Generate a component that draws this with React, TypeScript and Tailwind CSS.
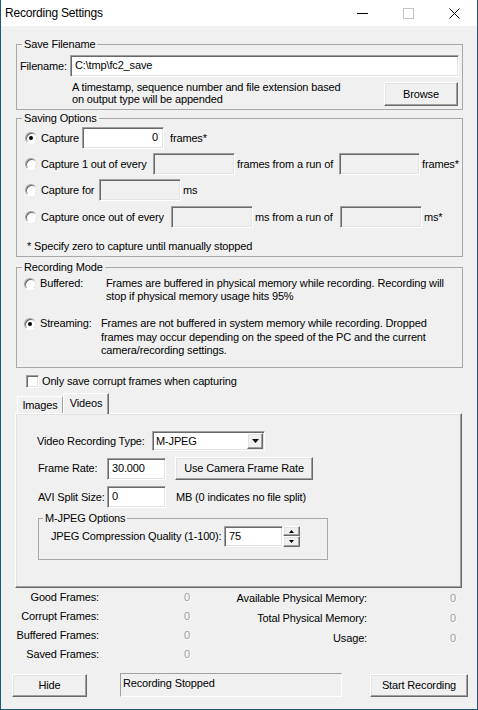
import React from 'react';

const raised =
  'bg-[#f0f0f0] border border-t-white border-l-white border-b-[#696969] border-r-[#696969] shadow-[inset_-1px_-1px_0_#a0a0a0,inset_1px_1px_0_#e3e3e3]';
const sunken =
  'border border-t-[#a0a0a0] border-l-[#a0a0a0] border-b-white border-r-white shadow-[inset_1px_1px_0_#696969,inset_-1px_-1px_0_#e3e3e3]';
const disabledText = 'text-[#a0a0a0] [text-shadow:1px_1px_0_#fff]';

const Radio = ({ checked }: { checked?: boolean }) => (
  <span className="flex w-[12px] h-[12px] shrink-0 items-center justify-center rounded-full bg-white border border-t-[#a0a0a0] border-l-[#a0a0a0] border-b-white border-r-[#e3e3e3] shadow-[inset_1px_1px_0_#696969]">
    {checked && <span className="w-[4px] h-[4px] rounded-full bg-black" />}
  </span>
);

const Field = ({ w, h = 22, value, white, right }: { w: string; h?: number; value?: string; white?: boolean; right?: boolean }) => (
  <div
    className={`${sunken} ${w} ${white ? 'bg-white' : 'bg-[#f0f0f0]'} ${right ? 'justify-end pr-[5px]' : 'pl-[4px]'} flex items-start pt-[3px] shrink-0`}
    style={{ height: h }}
  >
    {value}
  </div>
);

const Group = ({ title, className, legendMl = 'ml-[5px]', children }: { title: string; className: string; legendMl?: string; children?: React.ReactNode }) => (
  <fieldset className={`border border-[#a8a8a8] min-w-0 ${className}`}>
    <legend className={`${legendMl} px-[2px] leading-[13px]`}>{title}</legend>
    {children}
  </fieldset>
);

const Btn = ({ label, className }: { label: string; className: string }) => (
  <div className={`${raised} ${className} flex items-center justify-center shrink-0`}>{label}</div>
);

const Stat = ({ label, lw, vw, h }: { label: string; lw: string; vw: string; h: string }) => (
  <div className={`flex items-center ${h}`}>
    <div className={`${lw} text-right whitespace-nowrap`}>{label}</div>
    <div className={`${vw} text-right ${disabledText}`}>0</div>
  </div>
);

export default function App() {
  return (
    <div className="w-[478px] h-[710px] bg-[#f0f0f0] border-x border-b border-[#1f5779] flex flex-col font-['Liberation_Sans',Arial,sans-serif] text-[11px] leading-[13px] tracking-[-0.15px] text-black overflow-hidden">
      {/* Title bar */}
      <div className="h-[26px] bg-white flex items-center shrink-0">
        <div className="flex-1 pl-[4px] text-[12px] tracking-[-0.2px]">Recording Settings</div>
        <div className="w-[46px] h-[26px] flex items-center justify-center">
          <svg width="11" height="11" viewBox="0 0 11 11">
            <line x1="0" y1="5.5" x2="11" y2="5.5" stroke="#000" strokeWidth="1" />
          </svg>
        </div>
        <div className="w-[46px] h-[26px] flex items-center justify-center">
          <svg width="11" height="11" viewBox="0 0 11 11">
            <rect x="0.5" y="0.5" width="10" height="10" fill="none" stroke="#c4c4c4" strokeWidth="1" />
          </svg>
        </div>
        <div className="w-[46px] h-[26px] flex items-center justify-center">
          <svg width="11" height="11" viewBox="0 0 11 11">
            <path d="M0.5 0.5 L10.5 10.5 M10.5 0.5 L0.5 10.5" stroke="#000" strokeWidth="1" />
          </svg>
        </div>
      </div>

      {/* Body */}
      <div className="flex flex-col">
        <Group title="Save Filename" className="ml-[15px] mt-[12px] w-[447px] h-[72px]">
          <div className="flex items-center mt-[4px]">
            <div className="w-[53px] pl-[3px]">Filename:</div>
            <Field w="w-[389px]" white value="C:\tmp\fc2_save" />
          </div>
          <div className="flex justify-between items-start mt-[4px]">
            <div className="ml-[55px] leading-[12px] whitespace-nowrap">
              A timestamp, sequence number and file extension based
              <br />
              on output type will be appended
            </div>
            <Btn label="Browse" className="mt-[1px] mr-[4px] w-[74px] h-[24px]" />
          </div>
        </Group>

        <Group title="Saving Options" className="ml-[15px] mt-[2px] w-[447px] h-[145px]">
          <div className="flex flex-col gap-[4px] mt-[2px]">
            <div className="flex items-center h-[22px]">
              <span className="ml-[8px]"><Radio checked /></span>
              <div className="ml-[4px] w-[41px]">Capture</div>
              <Field w="w-[82px]" white right value="0" />
              <div className="ml-[6px]">frames*</div>
            </div>
            <div className="flex items-center h-[22px]">
              <span className="ml-[8px]"><Radio /></span>
              <div className="ml-[4px] w-[112px] whitespace-nowrap">Capture 1 out of every</div>
              <Field w="w-[82px]" />
              <div className="w-[104px] pl-[2px] whitespace-nowrap">frames from a run of</div>
              <Field w="w-[81px]" />
              <div className="ml-[2px]">frames*</div>
            </div>
            <div className="flex items-center h-[22px]">
              <span className="ml-[8px]"><Radio /></span>
              <div className="ml-[4px] w-[58px] whitespace-nowrap">Capture for</div>
              <Field w="w-[82px]" />
              <div className="ml-[2px]">ms</div>
            </div>
            <div className="flex items-center h-[22px] mt-[1px]">
              <span className="ml-[8px]"><Radio /></span>
              <div className="ml-[4px] w-[130px] whitespace-nowrap">Capture once out of every</div>
              <Field w="w-[82px]" />
              <div className="w-[87px] pl-[2px] whitespace-nowrap">ms from a run of</div>
              <Field w="w-[82px]" />
              <div className="ml-[2px]">ms*</div>
            </div>
          </div>
          <div className="pl-[10px] mt-[12px]">* Specify zero to capture until manually stopped</div>
        </Group>

        <Group title="Recording Mode" className="ml-[15px] mt-[4px] w-[447px] h-[107px]">
          <div className="flex items-start mt-[3px]">
            <span className="ml-[7px] mt-[1px]"><Radio /></span>
            <div className="ml-[4px] w-[66px]">Buffered:</div>
            <div className="whitespace-nowrap">
              Frames are buffered in physical memory while recording. Recording will
              <br />
              stop if physical memory usage hits 95%
            </div>
          </div>
          <div className="flex items-start mt-[14px]">
            <span className="ml-[7px] mt-[1px]"><Radio checked /></span>
            <div className="ml-[4px] w-[61px]">Streaming:</div>
            <div className="whitespace-nowrap leading-[13.5px]">
              Frames are not buffered in system memory while recording. Dropped
              <br />
              frames may occur depending on the speed of the PC and the current
              <br />
              camera/recording settings.
            </div>
          </div>
        </Group>

        <div className="flex items-center mt-[7px] ml-[25px] h-[13px]">
          <span className={`w-[13px] h-[13px] bg-white ${sunken}`} />
          <div className="ml-[3px]">Only save corrupt frames when capturing</div>
        </div>

        {/* Tabs */}
        <div className="flex items-end ml-[16px] mt-[5px] h-[20px]">
          <div className="w-[46px] h-[17px] flex items-center justify-center border-t border-l border-t-white border-l-white border-r border-r-[#a0a0a0]">
            Images
          </div>
          <div className="relative z-10 w-[46px] h-[21px] -mb-[1px] bg-[#f0f0f0] flex items-start justify-center pt-[3px] border-t border-l border-t-white border-l-white border-r border-r-[#696969] shadow-[inset_-1px_0_0_#a0a0a0]">
            Videos
          </div>
        </div>
        <div className={`${raised} ml-[14px] w-[447px] h-[175px] pl-[21px] pt-[17px]`}>
          <div className="flex items-center h-[20px]">
            <div className="w-[115px] whitespace-nowrap">Video Recording Type:</div>
            <div className={`${sunken} bg-white w-[113px] h-[20px] flex items-center justify-between pl-[3px] pr-[1px]`}>
              <span>M-JPEG</span>
              <div className={`${raised} w-[16px] h-[16px] flex items-center justify-center`}>
                <svg width="7" height="4" viewBox="0 0 7 4">
                  <path d="M0 0 H7 L3.5 4 Z" fill="#000" />
                </svg>
              </div>
            </div>
          </div>
          <div className="flex items-center mt-[6px]">
            <div className="w-[70px] pl-[1px]">Frame Rate:</div>
            <Field w="w-[59px]" white value="30.000" />
            <Btn label="Use Camera Frame Rate" className="ml-[9px] w-[138px] h-[23px]" />
          </div>
          <div className="flex items-center mt-[6px]">
            <div className="w-[70px] pl-[1px] whitespace-nowrap">AVI Split Size:</div>
            <Field w="w-[59px]" white value="0" />
            <div className="ml-[10px]">MB (0 indicates no file split)</div>
          </div>
          <Group title="M-JPEG Options" legendMl="ml-[4px]" className="ml-[1px] mt-[4px] w-[290px] h-[48px]">
            <div className="flex items-center mt-[1px] h-[21px]">
              <div className="w-[185px] pl-[12px] whitespace-nowrap">JPEG Compression Quality (1-100):</div>
              <Field w="w-[59px]" h={21} white value="75" />
              <div className="flex flex-col w-[17px] h-[21px]">
                <div className={`${raised} h-[10px] flex items-center justify-center`}>
                  <svg width="5" height="3" viewBox="0 0 5 3">
                    <path d="M0 3 H5 L2.5 0 Z" fill="#000" />
                  </svg>
                </div>
                <div className={`${raised} h-[11px] flex items-center justify-center`}>
                  <svg width="5" height="3" viewBox="0 0 5 3">
                    <path d="M0 0 H5 L2.5 3 Z" fill="#000" />
                  </svg>
                </div>
              </div>
            </div>
          </Group>
        </div>

        {/* Stats */}
        <div className="flex">
          <div className="flex flex-col w-[189px]">
            <Stat label="Good Frames:" lw="w-[98px]" vw="w-[91px]" h="h-[19px]" />
            <Stat label="Corrupt Frames:" lw="w-[98px]" vw="w-[91px]" h="h-[19px]" />
            <Stat label="Buffered Frames:" lw="w-[98px]" vw="w-[91px]" h="h-[19px]" />
            <Stat label="Saved Frames:" lw="w-[98px]" vw="w-[91px]" h="h-[19px]" />
          </div>
          <div className="flex flex-col">
            <Stat label="Available Physical Memory:" lw="w-[177px]" vw="w-[89px]" h="h-[20px]" />
            <Stat label="Total Physical Memory:" lw="w-[177px]" vw="w-[89px]" h="h-[20px]" />
            <Stat label="Usage:" lw="w-[177px]" vw="w-[89px]" h="h-[20px]" />
          </div>
        </div>

        {/* Bottom row */}
        <div className="flex items-start mt-[10px]">
          <Btn label="Hide" className="ml-[11px] w-[75px] h-[23px]" />
          <div className="ml-[33px] -mt-[1px] w-[222px] h-[24px] pl-[2px] pt-[3px] border border-t-[#a0a0a0] border-l-[#a0a0a0] border-b-white border-r-white">
            Recording Stopped
          </div>
          <Btn label="Start Recording" className="ml-[28px] w-[98px] h-[23px]" />
        </div>
      </div>
    </div>
  );
}
